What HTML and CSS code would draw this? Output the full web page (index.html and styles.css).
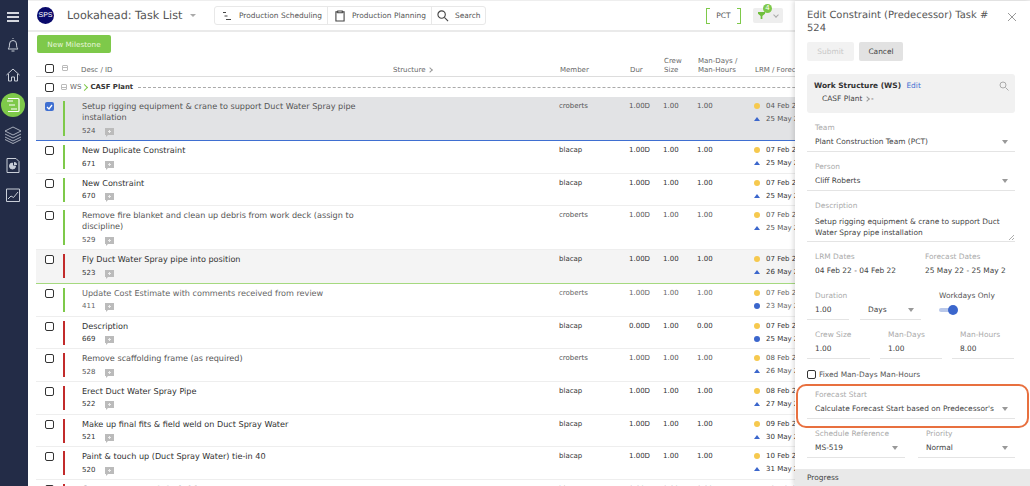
FILE: index.html
```html
<!DOCTYPE html>
<html lang="en">
  <head>
    <meta charset="UTF-8" />
    <title>Lookahead: Task List</title>
    <link rel="stylesheet" href="styles.css">
  </head>
  <body>
    <div class="app">
      <nav class="sidebar">
        <div class="burger"><span></span><span></span><span></span></div>
        <div class="nav-item">
          <svg width="16" height="16" viewBox="0 0 16 16" fill="none" stroke="#c9ced8"><path d="M3 12c1-1 1.500-2 1.500-5a3.500 3.500 0 0 1 7 0c0 3 .5 4 1.500 5zM6.500 14h3M8 2V1"/></svg>
        </div>
        <div class="nav-item">
          <svg width="16" height="16" viewBox="0 0 16 16" fill="none" stroke="#c9ced8"><path d="M1.500 8 8 2l6.500 6M3.500 7v7h3v-4h3v4h3V7"/></svg>
        </div>
        <div class="nav-item active">
          <svg width="16" height="16" viewBox="0 0 16 16" fill="none" stroke="#fff"><path d="M3 1.500h10a1 1 0 0 1 1 1v11a1 1 0 0 1-1 1H3M2 4h6M4 8h6M6 12h6" stroke-width="1.200"/></svg>
        </div>
        <div class="nav-item">
          <svg width="18" height="18" viewBox="0 0 18 18" fill="none" stroke="#c9ced8" stroke-width=".8"><path d="M9 1 1 5l8 4 8-4zM1 8l8 4 8-4M1 11l8 4 8-4M1 13.500l8 4 8-4"/></svg>
        </div>
        <div class="nav-item">
          <svg width="16" height="17" viewBox="0 0 16 17" fill="none" stroke="#c9ced8"><path d="M2 1.500h9l3 3v11H2z"/><path d="M7.500 6v3h3a3 3 0 1 1-3-3z" fill="#c9ced8"/><path d="M9 5a3 3 0 0 1 3 3H9z" fill="#c9ced8" stroke="none"/></svg>
        </div>
        <div class="nav-item">
          <svg width="16" height="16" viewBox="0 0 16 16" fill="none" stroke="#c9ced8"><path d="M1.500 2h13v12.500h-13zM3 12l3-3 2.500 1.500L13 5"/></svg>
        </div>
      </nav>

      <div class="content">
        <header class="topbar">
          <div class="logo">SPS</div>
          <div class="page-title">Lookahead: Task List</div>
          <span class="title-caret"></span>
          <div class="btn-group">
            <div class="group-btn btn-sched">
              <svg width="10" height="10" viewBox="0 0 10 10" fill="none" stroke="#444"><path d="M1 1.500h3M2.500 5h3M4 8.500h5"/></svg>
              Production Scheduling
            </div>
            <div class="group-btn btn-plan">
              <svg width="10" height="12" viewBox="0 0 11 13" fill="none" stroke="#444" stroke-width="1.200"><path d="M3 2H1v10h9V2H8M3 1h5v2H3z"/></svg>
              Production Planning
            </div>
            <div class="group-btn btn-search">
              <svg width="12" height="12" viewBox="0 0 13 13" fill="none" stroke="#444" stroke-width="1.200"><circle cx="5" cy="5" r="4"/><path d="m8 8 4 4"/></svg>
              Search
            </div>
          </div>
          <div class="team-tag">PCT</div>
          <div class="filter-btn">
            <svg width="7" height="7" viewBox="0 0 8 8" fill="#6fbf3c"><path d="M0 0h8v2L5 4.500V8H3V4.500L0 2z"/></svg>
            <span class="filter-badge">4</span>
            <span class="filter-chevron"></span>
          </div>
        </header>

        <div class="toolbar">
          <button class="btn-green">New Milestone</button>
        </div>

        <div class="thead">
          <div class="cell-check"><span class="check"></span></div>
          <div class="cell-bar"><span class="minus-box"></span></div>
          <div class="th-desc">
            <span class="th-desc-label">Desc / ID</span>
            <span>Structure <span class="gray-chevron"></span></span>
          </div>
          <div>Member</div>
          <div>Dur</div>
          <div>Crew<br>Size</div>
          <div>Man-Days /<br>Man-Hours</div>
          <div class="th-lrm">LRM / Forecast</div>
        </div>

        <div class="ws-row">
          <span class="check"></span>
          <span class="minus-box"></span>
          <span class="ws-label">WS</span>
          <span class="green-chevron"></span>
          <b>CASF Plant</b>
          <span class="ws-dash"></span>
        </div>

        <div class="row row-tall row-selected">
          <div class="cell-check"><span class="check checked"><svg width="7" height="6" viewBox="0 0 7 6" fill="none" stroke="#fff" stroke-width="1.300"><path d="m1 3 2 2 3-4"/></svg></span></div>
          <div class="bar green"></div>
          <div class="desc">
            <div class="title">Setup rigging equipment &amp; crane to support Duct Water Spray pipe installation</div>
            <div class="task-id">524 <span class="note"></span></div>
          </div>
          <div>croberts</div><div>1.00D</div><div>1.00</div><div>1.00</div>
          <div class="dates"><div><i class="dot"></i>04 Feb 22</div><div><i class="tri"></i>25 May 22</div></div>
        </div>

        <div class="row row-dark">
          <div class="cell-check"><span class="check"></span></div>
          <div class="bar green"></div>
          <div class="desc">
            <div class="title">New Duplicate Constraint</div>
            <div class="task-id">671 <span class="note"></span></div>
          </div>
          <div>blacap</div><div>1.00D</div><div>1.00</div><div>1.00</div>
          <div class="dates"><div><i class="dot"></i>07 Feb 22</div><div><i class="tri"></i>25 May 22</div></div>
        </div>

        <div class="row row-dark">
          <div class="cell-check"><span class="check"></span></div>
          <div class="bar green"></div>
          <div class="desc">
            <div class="title">New Constraint</div>
            <div class="task-id">670 <span class="note"></span></div>
          </div>
          <div>blacap</div><div>1.00D</div><div>1.00</div><div>1.00</div>
          <div class="dates"><div><i class="dot"></i>07 Feb 22</div><div><i class="tri"></i>25 May 22</div></div>
        </div>

        <div class="row row-tall">
          <div class="cell-check"><span class="check"></span></div>
          <div class="bar green"></div>
          <div class="desc">
            <div class="title">Remove fire blanket and clean up debris from work deck (assign to discipline)</div>
            <div class="task-id">529 <span class="note"></span></div>
          </div>
          <div>croberts</div><div>1.00D</div><div>1.00</div><div>1.00</div>
          <div class="dates"><div><i class="dot"></i>07 Feb 22</div><div><i class="tri"></i>25 May 22</div></div>
        </div>

        <div class="row row-dark row-hover">
          <div class="cell-check"><span class="check"></span></div>
          <div class="bar red"></div>
          <div class="desc">
            <div class="title">Fly Duct Water Spray pipe into position</div>
            <div class="task-id">523 <span class="note"></span></div>
          </div>
          <div>blacap</div><div>1.00D</div><div>1.00</div><div>1.00</div>
          <div class="dates"><div><i class="dot"></i>07 Feb 22</div><div><i class="tri"></i>26 May 22</div></div>
        </div>

        <div class="row row-muted">
          <div class="cell-check"><span class="check"></span></div>
          <div class="bar green"></div>
          <div class="desc">
            <div class="title">Update Cost Estimate with comments received from review</div>
            <div class="task-id">411 <span class="note"></span></div>
          </div>
          <div>croberts</div><div>1.00D</div><div>1.00</div><div>1.00</div>
          <div class="dates"><div><i class="dot"></i>07 Feb 22</div><div><i class="round"></i>23 May 22</div></div>
        </div>

        <div class="row row-dark">
          <div class="cell-check"><span class="check"></span></div>
          <div class="bar red"></div>
          <div class="desc">
            <div class="title">Description</div>
            <div class="task-id">669 <span class="note"></span></div>
          </div>
          <div>blacap</div><div>0.00D</div><div>1.00</div><div>0.00</div>
          <div class="dates"><div><i class="dot"></i>07 Feb 22</div><div><i class="round"></i>25 May 22</div></div>
        </div>

        <div class="row">
          <div class="cell-check"><span class="check"></span></div>
          <div class="bar red"></div>
          <div class="desc">
            <div class="title">Remove scaffolding frame (as required)</div>
            <div class="task-id">528 <span class="note"></span></div>
          </div>
          <div>croberts</div><div>1.00D</div><div>1.00</div><div>1.00</div>
          <div class="dates"><div><i class="dot"></i>08 Feb 22</div><div><i class="tri"></i>26 May 22</div></div>
        </div>

        <div class="row row-dark">
          <div class="cell-check"><span class="check"></span></div>
          <div class="bar red"></div>
          <div class="desc">
            <div class="title">Erect Duct Water Spray Pipe</div>
            <div class="task-id">522 <span class="note"></span></div>
          </div>
          <div>blacap</div><div>1.00D</div><div>1.00</div><div>1.00</div>
          <div class="dates"><div><i class="dot"></i>08 Feb 22</div><div><i class="tri"></i>27 May 22</div></div>
        </div>

        <div class="row row-dark">
          <div class="cell-check"><span class="check"></span></div>
          <div class="bar red"></div>
          <div class="desc">
            <div class="title">Make up final fits &amp; field weld on Duct Spray Water</div>
            <div class="task-id">521 <span class="note"></span></div>
          </div>
          <div>blacap</div><div>1.00D</div><div>1.00</div><div>1.00</div>
          <div class="dates"><div><i class="dot"></i>09 Feb 22</div><div><i class="tri"></i>30 May 22</div></div>
        </div>

        <div class="row row-dark">
          <div class="cell-check"><span class="check"></span></div>
          <div class="bar red"></div>
          <div class="desc">
            <div class="title">Paint &amp; touch up (Duct Spray Water) tie-in 40</div>
            <div class="task-id">520 <span class="note"></span></div>
          </div>
          <div>blacap</div><div>1.00D</div><div>1.00</div><div>1.00</div>
          <div class="dates"><div><i class="dot"></i>10 Feb 22</div><div><i class="tri"></i>31 May 22</div></div>
        </div>

        <div class="row row-dark">
          <div class="cell-check"><span class="check"></span></div>
          <div class="bar red"></div>
          <div class="desc">
            <div class="title"><b>SPRAY WATER PIPING COMPLETE</b></div>
          </div>
          <div>blacap</div><div>0.00D</div><div>0.00</div><div>0.00</div>
          <div class="dates"><div><i class="dot"></i>10 Feb 22</div></div>
        </div>
      </div>
    </div>

    <aside class="panel">
      <div class="panel-head">
        <h2>Edit Constraint (Predecessor) Task # 524</h2>
        <svg class="panel-close" width="10" height="10" viewBox="0 0 10 10" stroke="#999"><path d="m1 1 8 8M9 1 1 9"/></svg>
      </div>
      <div class="panel-actions">
        <button class="btn btn-disabled">Submit</button>
        <button class="btn btn-cancel">Cancel</button>
      </div>
      <div class="ws-box">
        <div><b>Work Structure (WS)</b> <a class="edit-link">Edit</a></div>
        <div class="ws-path">CASF Plant <span class="gray-chevron"></span> -</div>
        <svg class="ws-search" width="10" height="10" viewBox="0 0 10 10" fill="none" stroke="#aaa"><circle cx="4" cy="4" r="3"/><path d="m6.500 6.500 3 3"/></svg>
      </div>

      <div class="form">
        <div class="field select"><label>Team</label><div class="val">Plant Construction Team (PCT)</div></div>
        <div class="field select"><label>Person</label><div class="val">Cliff Roberts</div></div>
        <div class="field field-desc">
          <label>Description</label>
          <div class="val">Setup rigging equipment &amp; crane to support Duct Water Spray pipe installation</div>
          <svg class="resize-grip" width="5" height="5" viewBox="0 0 5 5" stroke="#888" stroke-width=".7"><path d="M0 5 5 0M3 5l2-2"/></svg>
        </div>
        <div class="field-row field-dates">
          <div class="field plain"><label>LRM Dates</label><div class="val">04 Feb 22 - 04 Feb 22</div></div>
          <div class="field plain"><label>Forecast Dates</label><div class="val nowrap">25 May 22 - 25 May 2</div></div>
        </div>
        <div class="field-row field-duration">
          <div class="field"><label>Duration</label><div class="val">1.00</div></div>
          <div class="field select"><label>&nbsp;</label><div class="val">Days</div></div>
          <div class="workdays">
            <div>Workdays Only</div>
            <div class="toggle"><span></span></div>
          </div>
        </div>
        <div class="field-row field-three">
          <div class="field"><label>Crew Size</label><div class="val">1.00</div></div>
          <div class="field"><label>Man-Days</label><div class="val">1.00</div></div>
          <div class="field"><label>Man-Hours</label><div class="val">8.00</div></div>
        </div>
        <div class="fixed-row"><span class="check"></span> Fixed Man-Days Man-Hours</div>
        <div class="field select"><label>Forecast Start</label><div class="val">Calculate Forecast Start based on Predecessor's</div></div>
        <div class="field-row field-two">
          <div class="field select"><label>Schedule Reference</label><div class="val">MS-519</div></div>
          <div class="field select"><label>Priority</label><div class="val">Normal</div></div>
        </div>
      </div>
      <div class="progress-head">Progress</div>
      <div class="highlight"></div>
    </aside>
  </body>
</html>
```
FILE: styles.css
```css
* {
  box-sizing: border-box;
}
html,
body {
  height: 100%;
  margin: 0;
  overflow: hidden;
}
body {
  font-family: 'DejaVu Sans', Verdana, sans-serif;
  font-size: 7px;
  color: #555;
  background-color: #fff;
  text-rendering: geometricPrecision;
}
b {
  color: #333;
}
.app {
  display: flex;
  height: 100%;
}

/* left nav */
.sidebar {
  flex: 0 0 28px;
  display: flex;
  flex-direction: column;
  align-items: center;
  background-color: #232c47;
}
.burger {
  display: flex;
  flex-direction: column;
  gap: 2px;
  width: 12px;
  height: 30px;
  padding-top: 12px;
  margin-right: 3px;
}
.burger span {
  display: block;
  height: 2px;
  background-color: #d5d8df;
}
.nav-item {
  display: flex;
  align-items: center;
  justify-content: center;
  width: 24px;
  height: 30px;
  margin-right: 3px;
  flex: none;
}
.nav-item.active {
  height: 24px;
  margin: 3px 3px 3px 0;
  background-color: #7ec94a;
  border-radius: 50%;
}

/* top bar */
.content {
  flex: 1;
  min-width: 0;
}
.topbar {
  display: flex;
  align-items: center;
  height: 32px;
  border-top: 1px solid #eee;
  border-bottom: 2px solid #eaeaea;
}
.logo {
  width: 17px;
  height: 17px;
  margin-left: 9px;
  border-radius: 50%;
  background-color: #0a0a6b;
  color: #fff;
  font-family: 'Liberation Sans', sans-serif;
  font-size: 7px;
  line-height: 17px;
  text-align: center;
}
.page-title {
  width: 117px;
  margin-left: 13px;
  font-size: 11.2px;
  white-space: nowrap;
  color: #555;
}
.title-caret {
  width: 0;
  height: 0;
  margin-left: 6px;
  border: 3px solid transparent;
  border-top: 3px solid #aaa;
  border-bottom: 0;
}
.btn-group {
  display: flex;
  align-items: center;
  height: 19px;
  margin-left: 18px;
  border: 1px solid #e8e8e8;
  border-radius: 3px;
  font-size: 7.45px;
}
.group-btn {
  display: flex;
  align-items: center;
  height: 100%;
  gap: 7px;
  padding-left: 7px;
  border-right: 1px solid #e8e8e8;
  white-space: nowrap;
}
.btn-sched {
  width: 113px;
}
.btn-plan {
  width: 104px;
}
.btn-search {
  width: 53px;
  gap: 6px;
  padding-left: 5px;
  border-right: 0;
}
.team-tag {
  position: relative;
  width: 35px;
  height: 16px;
  margin-left: auto;
  font-size: 7.5px;
  line-height: 15px;
  text-align: center;
}
.team-tag::before,
.team-tag::after {
  content: '';
  position: absolute;
  top: 0;
  bottom: 0;
  width: 3px;
  border: 1px solid #7ec94a;
}
.team-tag::before {
  left: 0;
  border-right: 0;
}
.team-tag::after {
  right: 0;
  border-left: 0;
}
.filter-btn {
  position: relative;
  display: flex;
  align-items: center;
  flex: none;
  width: 30px;
  height: 15px;
  margin: 0 247px 0 12px;
  padding-left: 5px;
  background-color: #eee;
  border-radius: 2px;
}
.filter-badge {
  position: absolute;
  top: -4px;
  left: 10px;
  width: 9px;
  height: 9px;
  border-radius: 50%;
  background-color: #7ec94a;
  color: #fff;
  font-size: 7px;
  line-height: 9px;
  text-align: center;
}
.filter-chevron {
  width: 4px;
  height: 4px;
  margin: -2px 0 0 9px;
  border-right: 1px solid #aaa;
  border-bottom: 1px solid #aaa;
  transform: rotate(45deg);
}

.toolbar {
  padding: 3px 0 0 9px;
}
.btn-green {
  display: block;
  width: 74px;
  height: 18px;
  padding: 0;
  border: 0;
  border-radius: 2px;
  background-color: #7ec94a;
  color: #e8f6dc;
  font-family: inherit;
  font-size: 7.3px;
}

/* table */
.thead,
.row {
  display: grid;
  grid-template-columns: 27px 19px 477px 70px 34px 34px 57px 1fr;
  margin-left: 8px;
}
.thead {
  height: 24px;
  align-items: end;
  padding-bottom: 2px;
  border-bottom: 1px solid #ddd;
  line-height: 8.5px;
  color: #666;
}
.thead > div {
  padding-left: 1px;
  white-space: nowrap;
}
.thead .cell-check {
  padding-left: 9px;
  padding-bottom: 1px;
}
.thead .cell-bar {
  padding-left: 0;
  margin-left: -1px;
  padding-bottom: 1px;
}
.th-desc {
  display: flex;
  margin-left: -2px;
}
.th-desc-label {
  width: 312px;
}
.cell-check {
  padding-left: 9px;
  line-height: 0;
}
.check {
  display: inline-block;
  width: 9px;
  height: 9px;
  border: 1.500px solid #333;
  border-radius: 2px;
  background-color: #fff;
  line-height: 0;
  flex: none;
}
.checked {
  display: inline-flex;
  align-items: center;
  justify-content: center;
  border: 0;
  background-color: #3f6fd1;
}
.minus-box {
  display: inline-block;
  width: 6px;
  height: 6px;
  border: 1px solid #bbb;
  border-radius: 1px;
  background: linear-gradient(#bbb, #bbb) center / 4px 1px no-repeat;
}
.gray-chevron {
  display: inline-block;
  width: 4px;
  height: 4px;
  border-top: 1px solid #999;
  border-right: 1px solid #999;
  transform: rotate(45deg);
}
.green-chevron {
  display: inline-block;
  width: 5px;
  height: 5px;
  margin-left: -4px;
  border-top: 1px solid #7ec94a;
  border-right: 1px solid #7ec94a;
  transform: rotate(45deg);
}
.ws-row {
  display: flex;
  align-items: center;
  gap: 5px;
  height: 20px;
  margin-left: 8px;
  padding-left: 9px;
  font-size: 7px;
}
.ws-row .minus-box {
  margin-left: 2px;
  margin-right: -2px;
}
.ws-row b {
  margin-left: -2px;
  font-size: 6.9px;
}
.ws-label {
  color: #666;
}
.ws-dash {
  flex: 1;
  border-top: 1px dashed #aaa;
}
.row {
  height: 32.7px;
  padding: 4px 0 0;
  border-bottom: 1px solid #eee;
  line-height: 11px;
}
.row-tall {
  height: 44px;
}
.row-selected {
  background-color: #e2e3e5;
  border-bottom: 1px solid #3f6fd1;
}
.row-hover {
  height: 33.5px;
  background-color: #f4f4f4;
  border-bottom: 1px solid #a5d97f;
}
.row-dark {
  color: #333;
}
.row-muted {
  color: #666;
}
.row .check {
  margin-top: 1px;
}
.bar {
  width: 2px;
  height: 24px;
}
.row-tall .bar {
  height: 35px;
}
.bar.green {
  background-color: #7ec94a;
}
.bar.red {
  background-color: #c22b2b;
}
.title {
  width: 290px;
  font-size: 8.1px;
}
.title b {
  font-size: 8.4px;
}
.task-id {
  display: flex;
  align-items: center;
  gap: 10px;
  height: 10px;
  margin-top: 3px;
}
.note {
  position: relative;
  width: 9px;
  height: 7px;
  background: linear-gradient(#eee, #eee) center / 3px 1px no-repeat,
    linear-gradient(#eee, #eee) center / 1px 3px no-repeat,
    #bbb;
}
.note::after {
  content: '';
  position: absolute;
  left: 1px;
  bottom: -2px;
  border-left: 2px solid #bbb;
  border-bottom: 2px solid transparent;
}
.dates {
  line-height: 13px;
  margin-top: -1px;
  white-space: nowrap;
}
.dates i {
  display: inline-block;
  margin-right: 6px;
  vertical-align: middle;
}
.dot {
  width: 6px;
  height: 6px;
  border-radius: 50%;
  background-color: #f6c94e;
}
.round {
  width: 6px;
  height: 6px;
  border-radius: 50%;
  background-color: #3b66cc;
}
.tri {
  width: 0;
  height: 0;
  border: 3px solid transparent;
  border-top: 0;
  border-bottom: 4px solid #3b66cc;
}

/* edit panel */
.panel {
  position: absolute;
  top: 1px;
  right: 0;
  bottom: 0;
  width: 235px;
  padding-top: 8px;
  background-color: #fff;
  box-shadow: -2px 0 4px rgba(0, 0, 0, 0.12);
  font-size: 7.45px;
  color: #444;
}
.panel-head {
  display: flex;
  justify-content: space-between;
  padding: 0 13px 0 12px;
}
.panel-head h2 {
  width: 190px;
  margin: 0;
  font-size: 9.95px;
  font-weight: normal;
  line-height: 13px;
  color: #555;
}
.panel-close {
  margin-top: 3px;
  flex: none;
}
.panel-actions {
  display: flex;
  gap: 5px;
  margin: 7px 0 0 12px;
}
.btn {
  height: 19px;
  padding: 0;
  border: 0;
  border-radius: 2px;
  font-family: inherit;
  font-size: 7.45px;
}
.btn-disabled {
  width: 47px;
  background-color: #f2f2f2;
  color: #c8c8c8;
}
.btn-cancel {
  width: 44px;
  background-color: #e2e2e2;
  color: #444;
}
.ws-box {
  position: relative;
  height: 39px;
  margin: 13px 15px 0 12px;
  padding: 6px 7px 0;
  background-color: #f1f1f1;
  border-radius: 3px;
  line-height: 12px;
}
.edit-link {
  margin-left: 3px;
  color: #3f6fd1;
}
.ws-path {
  margin-left: 8px;
  line-height: 13px;
}
.ws-search {
  position: absolute;
  top: 7px;
  right: 6px;
}
.form {
  display: flex;
  flex-direction: column;
  gap: 8px;
  margin: 8px 15px 0 12px;
}
.field {
  position: relative;
  height: 31px;
  padding-left: 8px;
  border-bottom: 1px solid #e4e4e4;
  line-height: 14px;
}
.field label {
  display: block;
  color: #aaa;
}
.select::after {
  content: '';
  position: absolute;
  top: 19px;
  right: 7px;
  border: 3px solid transparent;
  border-top: 4px solid #999;
  border-bottom: 0;
}
.field-desc {
  height: 43px;
  line-height: 11px;
}
.field-desc label {
  line-height: 14px;
}
.field-desc .val {
  margin-top: 3px;
}
.resize-grip {
  position: absolute;
  right: 1px;
  bottom: 1px;
}
.plain {
  border-bottom: 0;
}
.nowrap {
  white-space: nowrap;
}
.field-row {
  display: grid;
  column-gap: 10px;
}
.field-dates {
  grid-template-columns: 100px 98px;
}
.field-duration {
  grid-template-columns: 42px 61px 1fr;
  column-gap: 11px;
}
.workdays {
  line-height: 14px;
  padding-left: 7px;
  color: #555;
}
.toggle {
  position: relative;
  width: 16px;
  height: 4px;
  margin-top: 5px;
  border-radius: 2px;
  background-color: #b9c8ea;
}
.toggle span {
  position: absolute;
  top: -3px;
  right: -3px;
  width: 10px;
  height: 10px;
  border-radius: 50%;
  background-color: #3b66cc;
}
.field-three {
  grid-template-columns: 63px 62px 62px;
}
.fixed-row {
  display: flex;
  align-items: center;
  gap: 3px;
  height: 14px;
  margin-bottom: -1px;
  color: #555;
}
.field-two {
  grid-template-columns: 98px 97px;
  column-gap: 13px;
}
.progress-head {
  height: 20px;
  margin-top: 11px;
  padding-left: 12px;
  background-color: #e9e9e9;
  line-height: 18px;
}
.highlight {
  position: absolute;
  top: 383px;
  left: 1px;
  width: 233px;
  height: 44px;
  border: 2px solid #e8703f;
  border-radius: 10px;
}
```
